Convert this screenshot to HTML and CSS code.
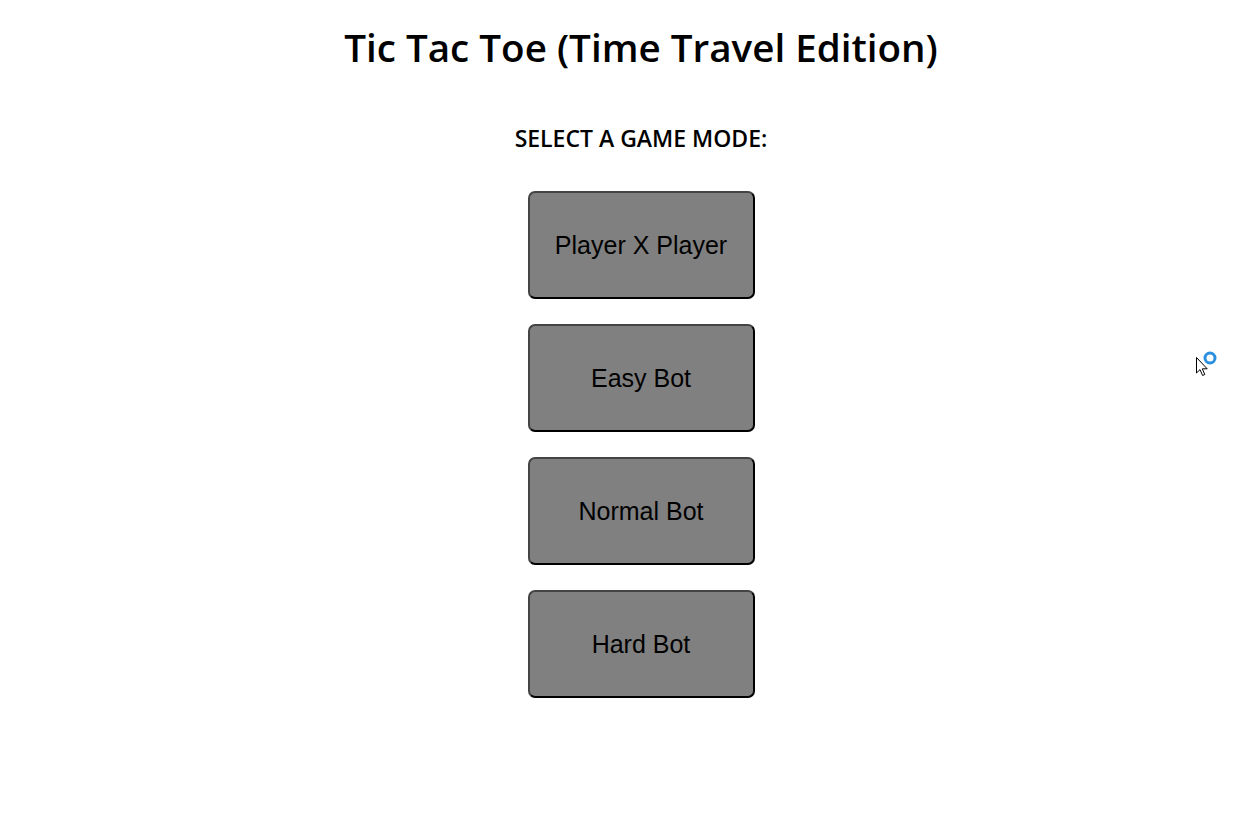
FILE: index.html
```html
<!DOCTYPE html>
<html lang="en">
<head>
<meta charset="utf-8">
<title>Tic Tac Toe (Time Travel Edition)</title>
<link rel="stylesheet" href="styles.css">
</head>
<body>
<main class="app">
  <h1 class="title">Tic Tac Toe (Time Travel Edition)</h1>
  <h2 class="subtitle">SELECT A GAME MODE:</h2>
  <div class="modes">
    <button class="mode-btn">Player X Player</button>
    <button class="mode-btn">Easy Bot</button>
    <button class="mode-btn">Normal Bot</button>
    <button class="mode-btn">Hard Bot</button>
  </div>
</main>
<svg class="cursor" width="30" height="30" viewBox="0 0 30 30">
  <path d="M2.5 7.5 L2.5 23 L6 19.6 L8.6 25.5 L10.8 24.5 L8.3 18.8 L13.2 18.8 Z" fill="#fff" stroke="#000" stroke-width="1" stroke-linejoin="round"/>
  <circle cx="16" cy="8" r="5" fill="none" stroke="#2a8fe0" stroke-width="3"/>
</svg>
</body>
</html>
```
FILE: styles.css
```css
html, body {
  margin: 0;
  padding: 0;
  background: #fff;
}
.app {
  display: flex;
  flex-direction: column;
  align-items: center;
  padding-left: 29px;
  font-family: "Open Sans", sans-serif;
  color: #000;
}
.title {
  margin: 21px 0 0;
  font-size: 38.6px;
  font-weight: 600;
  line-height: 52px;
}
.subtitle {
  margin: 50px 0 0;
  font-size: 23px;
  font-weight: 600;
  line-height: 30px;
}
.modes {
  margin-top: 38px;
  display: flex;
  flex-direction: column;
  gap: 25px;
}
.mode-btn {
  box-sizing: border-box;
  width: 227px;
  height: 108px;
  background: #808080;
  border: 2px solid;
  border-color: #444 #000 #000 #444;
  border-radius: 7px;
  font-family: "Liberation Sans", Arial, sans-serif;
  font-size: 25px;
  color: #000;
  padding: 0;
}
.cursor {
  position: absolute;
  left: 1194px;
  top: 350px;
}
```
